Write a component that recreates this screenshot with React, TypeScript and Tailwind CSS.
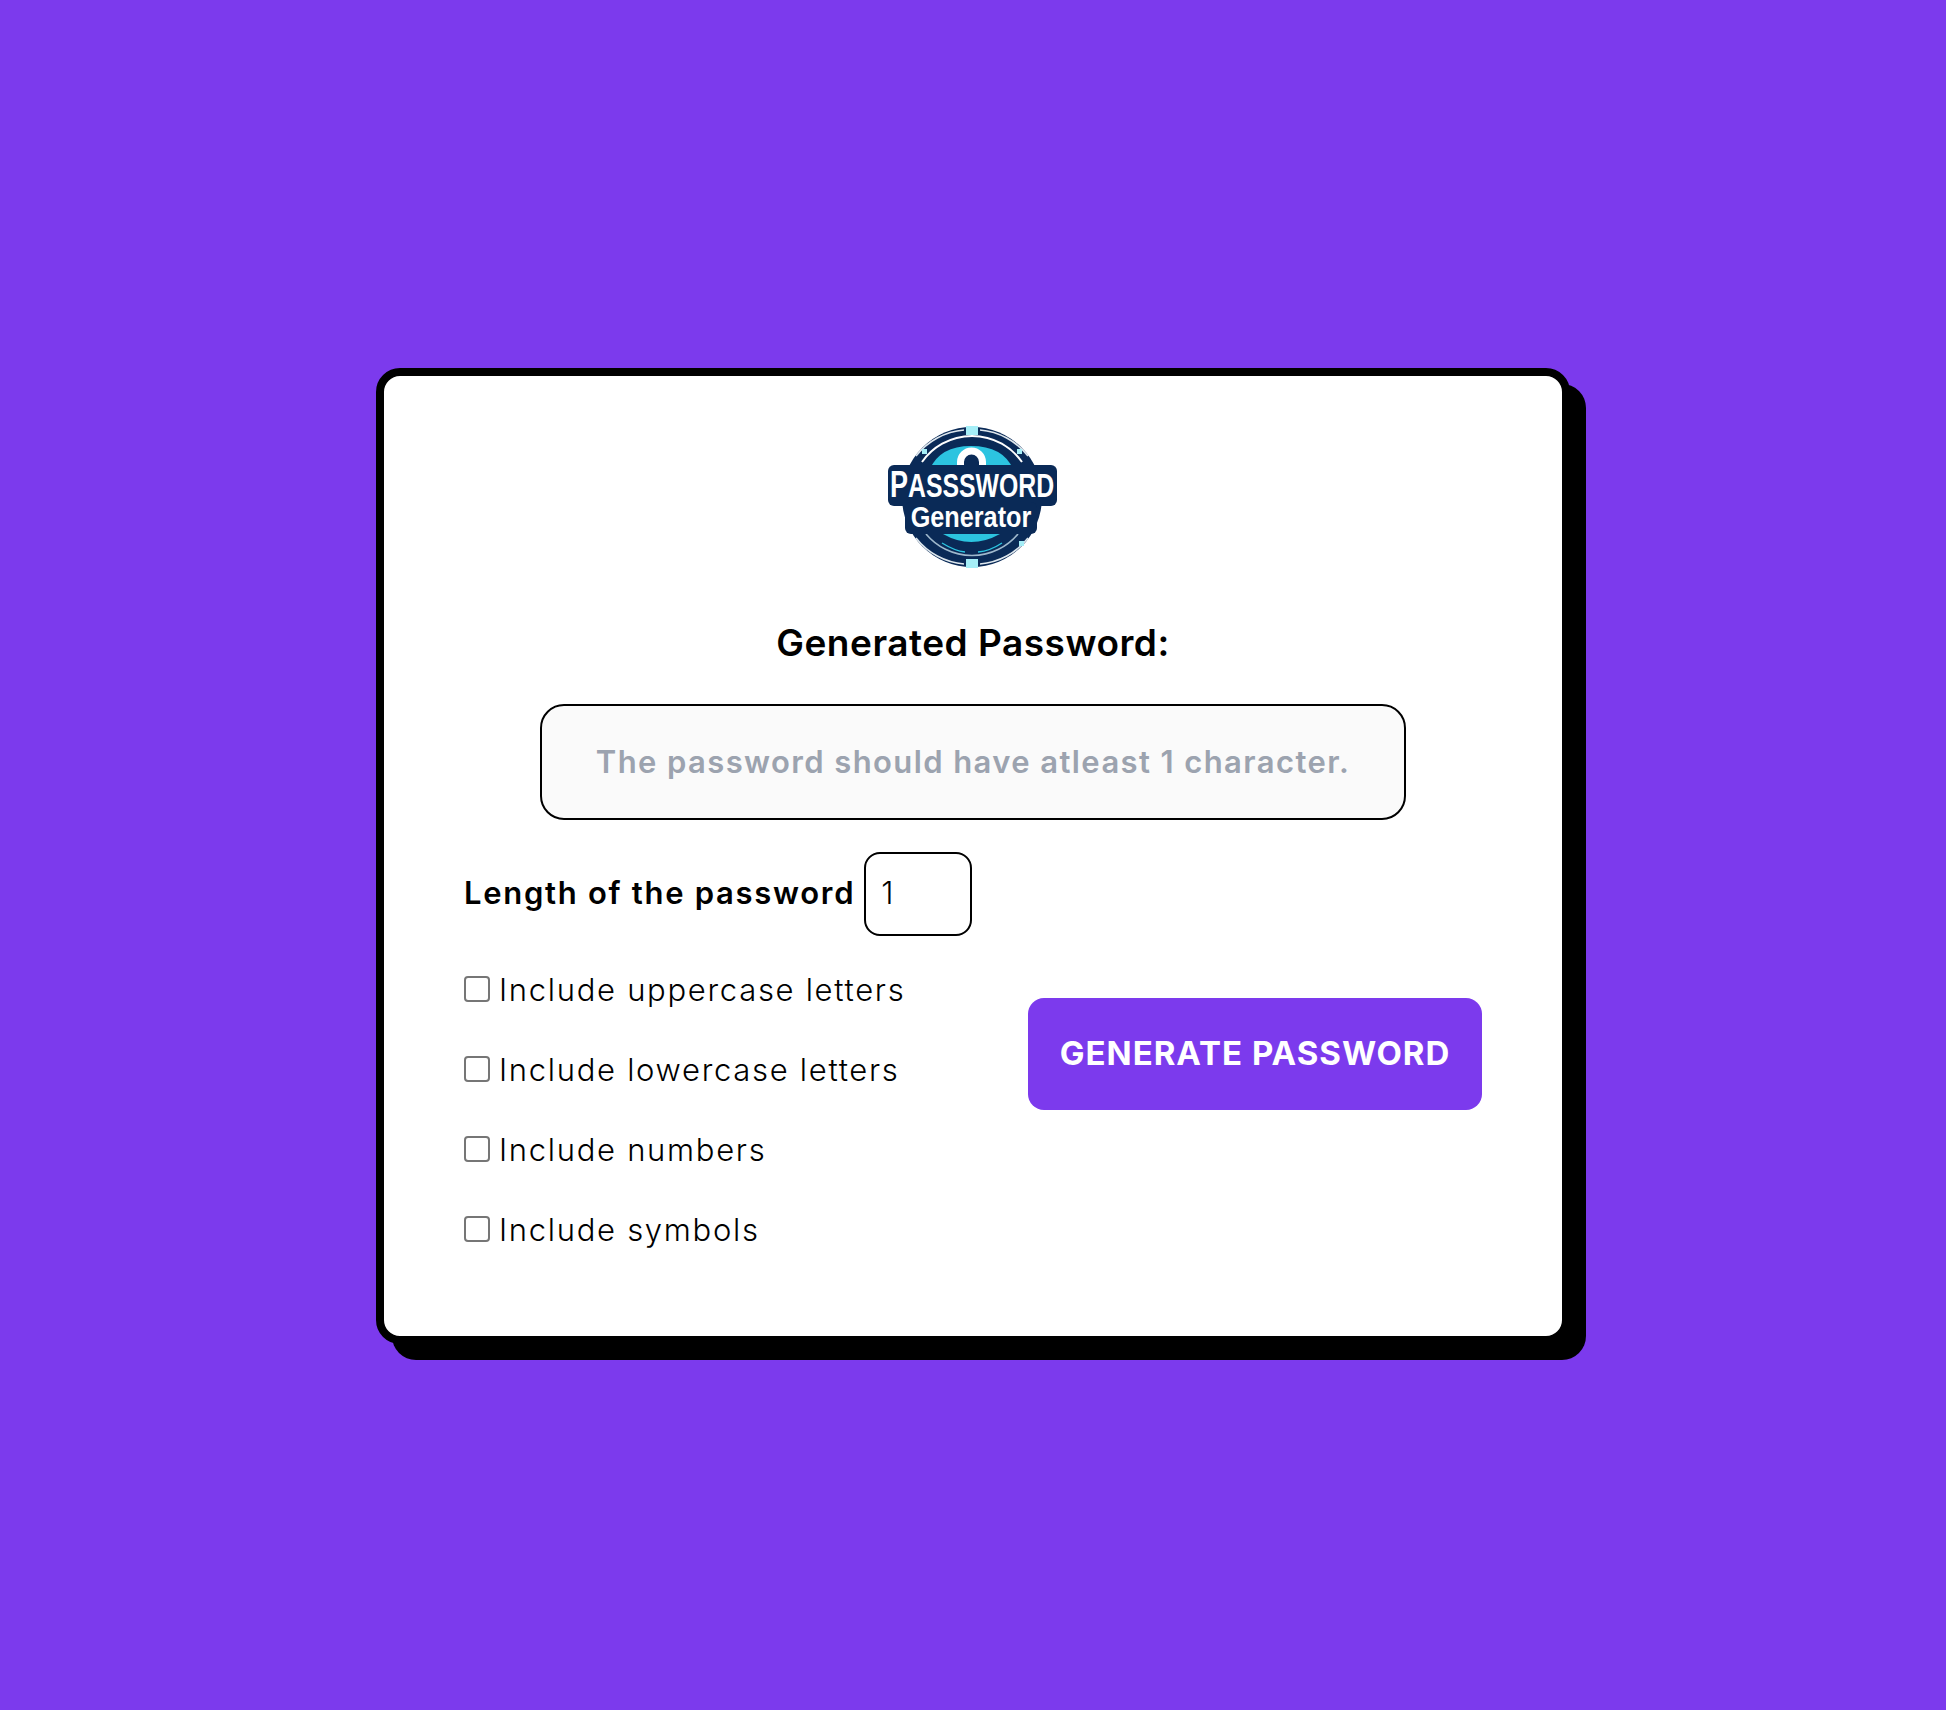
const font = "font-['Inter','Noto_Sans',sans-serif]";

function Logo() {
	return (
		<svg width="210" height="170" viewBox="0 0 210 170" className="block">
			<circle cx="102" cy="87" r="70" fill="#0a2a57" />
			{/* outer ring, broken at the studs */}
			<path d="M46 46 A68 68 0 0 1 94 20 M110 20 A68 68 0 0 1 158 46" fill="none" stroke="#dfe8ee" strokeWidth="1.6" />
			<path d="M46 128 A68 68 0 0 0 94 154 M110 154 A68 68 0 0 0 158 128" fill="none" stroke="#dfe8ee" strokeWidth="1.6" />
			<path d="M52 52 A61 61 0 0 1 152 52" fill="none" stroke="#ffffff" strokeWidth="2" />
			<path d="M56 124 A60 60 0 0 0 148 124" fill="none" stroke="#9fb8cc" strokeWidth="1.6" />
			<path d="M60 59 Q70 36 101 36 Q133 36 143 59 Z" fill="#2cc4e0" />
			<path d="M73 124 Q101 140 130 124 Z" fill="#2cc4e0" />
			<path d="M72 133 Q85 141 95 142 M108 142 Q120 141 132 133" fill="none" stroke="#2cc4e0" strokeWidth="1.4" />
			<rect x="96" y="16" width="12" height="9" fill="#a5eef7" />
			<rect x="96" y="149" width="12" height="9" fill="#a5eef7" />
			<rect x="52" y="39" width="5" height="5" fill="#a5eef7" />
			<rect x="147" y="39" width="5" height="5" fill="#a5eef7" />
			<rect x="149" y="131" width="5" height="5" fill="#a5eef7" />
			<path d="M90.5 60 V52 A11 11 0 0 1 112.5 52 V60" fill="#0a2a57" stroke="#ffffff" strokeWidth="7" />
			<rect x="18" y="55" width="169" height="41" rx="6" fill="#0a2a57" />
			<rect x="35" y="92" width="132" height="32" rx="6" fill="#0a2a57" />
			<text
				transform="translate(102 87) scale(0.73 1)"
				textAnchor="middle"
				fill="#ffffff"
				fontFamily="'Liberation Sans', sans-serif"
				fontWeight="700"
				fontSize="34"
			>
				<tspan fontSize="37">P</tspan>ASSSWORD
			</text>
			<text
				transform="translate(101 117) scale(0.87 1)"
				textAnchor="middle"
				fill="#ffffff"
				fontFamily="'Liberation Sans', sans-serif"
				fontWeight="700"
				fontSize="29"
			>
				Generator
			</text>
		</svg>
	);
}

function Option({ label }: { label: string }) {
	return (
		<label className="flex h-10 items-center gap-[9px] text-[31px] font-light tracking-[1.7px] text-black">
			<input
				type="checkbox"
				className="m-0 -mt-0.5 h-[26px] w-[26px] appearance-none rounded-[4px] border-2 border-[#767676] bg-white"
			/>
			{label}
		</label>
	);
}

export default function App() {
	return (
		<div className={`flex min-h-screen items-center justify-center bg-[#7c3aed] pt-[2px] ${font}`}>
			<div className="h-[976px] w-[1194px] rounded-3xl border-8 border-black bg-white px-20 pt-[34px] shadow-[16px_16px_0_0_#000]">
				<div className="flex justify-center pl-[3px]">
					<Logo />
				</div>
				<h1 className="mt-9 text-center text-[37px] leading-[54px] font-semibold tracking-[0.5px] text-black">
					Generated Password:
				</h1>
				<div className="mx-auto mt-[34px] flex h-[116px] w-[866px] items-center justify-center rounded-3xl border-2 border-black bg-[#fafafa] text-[31px] font-semibold tracking-[1.4px] text-[#9ca3af]">
					The password should have atleast 1 character.
				</div>
				<div className="mt-8 flex h-[84px] items-center gap-[9px] text-[31px] font-semibold tracking-[1.7px] text-black">
					<span className="-mt-0.5">Length of the password</span>
					<div className="flex h-[84px] w-[108px] items-center rounded-2xl border-2 border-black px-[15px] pb-0.5 font-light">1</div>
				</div>
				<div className="mt-[34px] flex justify-between">
					<div className="flex flex-col gap-10">
						<Option label="Include uppercase letters" />
						<Option label="Include lowercase letters" />
						<Option label="Include numbers" />
						<Option label="Include symbols" />
					</div>
					<button className="mt-[28px] h-[112px] w-[454px] rounded-2xl bg-[#7c3aed] text-[33px] font-bold tracking-[1px] text-white">
						GENERATE PASSWORD
					</button>
				</div>
			</div>
		</div>
	);
}
